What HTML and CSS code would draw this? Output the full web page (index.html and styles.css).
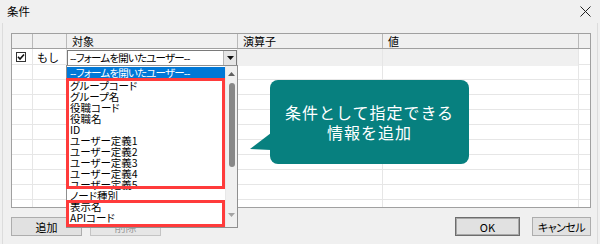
FILE: index.html
```html
<!DOCTYPE html>
<html lang="ja">
<head>
    <meta charset="UTF-8">
    <title>条件</title>
    <link rel="stylesheet" href="styles.css">
</head>
<body>

<div class="window">
    <div class="titlebar">
        <span class="title">条件</span>
        <svg class="close" width="11" height="11" viewBox="0 0 11 11">
            <path d="M0.5 0.5 L10.5 10.5 M10.5 0.5 L0.5 10.5" stroke="#222" stroke-width="1" fill="none"/>
        </svg>
    </div>

    <div class="client">
        <div class="grid">
            <div class="row head">
                <div class="cell"></div>
                <div class="cell"></div>
                <div class="cell">対象</div>
                <div class="cell">演算子</div>
                <div class="cell">値</div>
                <div class="cell"></div>
            </div>
            <div class="row current">
                <div class="cell"><span class="check">
                    <svg width="8" height="8" viewBox="0 0 8 8"><path d="M1 3.8 L3 6 L7 1.5" stroke="#111" stroke-width="1.6" fill="none"/></svg>
                </span></div>
                <div class="cell label">もし</div>
                <div class="cell">
                    <div class="combo">
                        <span class="combo-text">--フォームを開いたユーザー--</span>
                        <span class="combo-btn"><svg width="7" height="4" viewBox="0 0 7 4"><path d="M0 0 H7 L3.5 4 Z" fill="#111"/></svg></span>
                    </div>
                </div>
                <div class="cell readonly"></div>
                <div class="cell readonly"></div>
                <div class="cell"></div>
            </div>
            <div class="row"><div class="cell"></div><div class="cell"></div><div class="cell"></div><div class="cell"></div><div class="cell"></div><div class="cell"></div></div>
            <div class="row"><div class="cell"></div><div class="cell"></div><div class="cell"></div><div class="cell"></div><div class="cell"></div><div class="cell"></div></div>
            <div class="row"><div class="cell"></div><div class="cell"></div><div class="cell"></div><div class="cell"></div><div class="cell"></div><div class="cell"></div></div>
            <div class="row"><div class="cell"></div><div class="cell"></div><div class="cell"></div><div class="cell"></div><div class="cell"></div><div class="cell"></div></div>
            <div class="row"><div class="cell"></div><div class="cell"></div><div class="cell"></div><div class="cell"></div><div class="cell"></div><div class="cell"></div></div>
            <div class="row"><div class="cell"></div><div class="cell"></div><div class="cell"></div><div class="cell"></div><div class="cell"></div><div class="cell"></div></div>
            <div class="row"><div class="cell"></div><div class="cell"></div><div class="cell"></div><div class="cell"></div><div class="cell"></div><div class="cell"></div></div>
            <div class="row"><div class="cell"></div><div class="cell"></div><div class="cell"></div><div class="cell"></div><div class="cell"></div><div class="cell"></div></div>
            <div class="row"><div class="cell"></div><div class="cell"></div><div class="cell"></div><div class="cell"></div><div class="cell"></div><div class="cell"></div></div>
            <div class="row"><div class="cell"></div><div class="cell"></div><div class="cell"></div><div class="cell"></div><div class="cell"></div><div class="cell"></div></div>
        </div>

        <div class="actions">
            <button class="btn btn-add">追加</button>
            <button class="btn btn-del" disabled>削除</button>
            <span class="spacer"></span>
            <button class="btn btn-ok">OK</button>
            <button class="btn btn-cancel">キャンセル</button>
        </div>
    </div>

    <!-- 開いたドロップダウン -->
    <div class="dropdown">
        <ul class="options">
            <li class="selected">--フォームを開いたユーザー--</li>
            <li>グループコード</li>
            <li>グループ名</li>
            <li>役職コード</li>
            <li>役職名</li>
            <li>ID</li>
            <li>ユーザー定義1</li>
            <li>ユーザー定義2</li>
            <li>ユーザー定義3</li>
            <li>ユーザー定義4</li>
            <li>ユーザー定義5</li>
            <li>ノード種別</li>
            <li>表示名</li>
            <li>APIコード</li>
        </ul>
        <div class="scrollbar">
            <span class="arrow up"><svg width="7" height="4" viewBox="0 0 7 4"><path d="M0 4 H7 L3.5 0 Z" fill="#606060"/></svg></span>
            <span class="thumb"></span>
            <span class="arrow down"><svg width="7" height="4" viewBox="0 0 7 4"><path d="M0 0 H7 L3.5 4 Z" fill="#a3a3a3"/></svg></span>
        </div>
    </div>

    <div class="mark mark-top"></div>
    <div class="mark mark-bottom"></div>

    <div class="callout">条件として指定できる<br>情報を追加</div>
</div>

</body>
</html>
```

FILE: styles.css
```css
body {
    margin: 0;
    font-family: "Noto Sans CJK JP", "Noto Sans", sans-serif;
    font-size: 11px;
    color: #000;
}

.window {
    position: relative;
    width: 600px;
    height: 244px;
    background-color: #f0f0f0;
    overflow: hidden;
}

.titlebar {
    height: 23px;
    display: flex;
    align-items: center;
    justify-content: space-between;
    padding: 0 9px 1px 7px;
    box-sizing: border-box;
}

.title {
    font-size: 11.5px;
    line-height: 12px;
}

.client {
    margin: 0 2px;
    border-left: 1px solid #dcdcdc;
    border-right: 1px solid #dcdcdc;
    padding: 10px 0 0 8px;
    height: 221px;
    box-sizing: border-box;
}

/* 条件の表 */
.grid {
    width: 580px;
    height: 175px;
    border: 1px solid #a0a0a0;
    box-sizing: border-box;
    background-color: #fff;
    overflow: hidden;
}

.row {
    display: grid;
    grid-template-columns: 21px 34px 171px 145px 196px 11px;
    height: 15px;
    border-bottom: 1px solid #e6e6e6;
    box-sizing: border-box;
}

.cell {
    border-right: 1px solid #e6e6e6;
    box-sizing: border-box;
    line-height: 14px;
    white-space: nowrap;
}

.cell:last-child {
    border-right: none;
}

.row.head {
    background-color: #f0f0f0;
    border-bottom: 1px solid #a0a0a0;
}

.row.head .cell {
    border-right-color: #b9b9b9;
    padding-left: 5px;
    font-feature-settings: "palt";
}

.row.current {
    height: 16px;
}

.readonly {
    background-color: #f0f0f0;
}

.check {
    display: flex;
    align-items: center;
    justify-content: center;
    width: 10px;
    height: 10px;
    margin: 3px 0 0 4px;
    border: 1px solid #333;
    box-sizing: border-box;
    background-color: #fff;
}

.label {
    padding-left: 4px;
    line-height: 16px;
}

.combo {
    display: flex;
    height: 16px;
    margin-top: 1px;
    border: 1px solid #7a7a7a;
    box-sizing: border-box;
    background-color: #fff;
}

.combo-text {
    flex: 1;
    padding-left: 2px;
    line-height: 13px;
    font-size: 10.5px;
    font-feature-settings: "palt";
    letter-spacing: -0.8px;
}

.combo-btn {
    width: 12px;
    display: flex;
    align-items: center;
    justify-content: center;
    background-color: #e5e5e5;
    border-left: 1px solid #b5b5b5;
}

/* ボタン */
.actions {
    display: flex;
    width: 580px;
    margin-top: 9px;
}

.spacer {
    flex: 1;
}

.btn {
    height: 19px;
    padding: 0;
    font-family: inherit;
    font-size: 11px;
    line-height: 16px;
    color: #000;
    background-color: #e1e1e1;
    border: 1px solid #adadad;
    font-feature-settings: "palt";
}

.btn-add {
    width: 71px;
}

.btn-del {
    width: 71px;
    margin-left: 8px;
    color: #9a9a9a;
    background-color: #e6e6e6;
    border-color: #c4c4c4;
}

.btn-ok {
    width: 65px;
    border: 1px solid #6d6d6d;
    box-shadow: inset 0 0 0 1px #a8a8a8;
}

.btn-cancel {
    width: 59px;
    margin-left: 12px;
    letter-spacing: -0.5px;
}

/* ドロップダウン一覧 */
.dropdown {
    position: absolute;
    left: 66px;
    top: 65px;
    width: 172px;
    height: 163px;
    display: flex;
    border: 1px solid #8f8f8f;
    box-sizing: border-box;
    background-color: #fff;
}

.options {
    flex: 1;
    margin: 0;
    padding: 1px 0 0;
    list-style: none;
    font-size: 10.5px;
}

.options li {
    height: 11px;
    line-height: 11px;
    padding-left: 3px;
    white-space: nowrap;
    font-feature-settings: "palt";
    position: relative;
    top: 1px;
}

.options li.selected {
    height: 12px;
    line-height: 12px;
    top: 0;
    background-color: #0078d7;
    color: #fff;
    letter-spacing: -0.8px;
}

.scrollbar {
    width: 11px;
    display: flex;
    flex-direction: column;
    align-items: center;
    background-color: #f0f0f0;
    border-left: 1px solid #e8e8e8;
}

.arrow {
    display: flex;
    align-items: center;
    justify-content: center;
    height: 16px;
}

.thumb {
    width: 6px;
    height: 84px;
    margin-top: 1px;
    border-radius: 3px;
    background-color: #888;
}

.arrow.down {
    margin-top: auto;
    margin-bottom: 4px;
}

/* 注釈 */
.mark {
    position: absolute;
    left: 66px;
    width: 159px;
    border: 3px solid #ff3b3b;
    box-sizing: border-box;
}

.mark-top {
    top: 78px;
    height: 111px;
}

.mark-bottom {
    top: 200px;
    height: 27px;
}

.callout {
    position: absolute;
    left: 270px;
    top: 80px;
    width: 199px;
    height: 84px;
    display: flex;
    align-items: center;
    justify-content: center;
    text-align: center;
    border-radius: 8px;
    background-color: #07807f;
    color: #fff;
    font-size: 16px;
    line-height: 20px;
    letter-spacing: 1px;
}

.callout::before {
    content: "";
    position: absolute;
    left: -20px;
    top: 53px;
    width: 21px;
    height: 17px;
    background-color: #07807f;
    clip-path: polygon(100% 0, 0 94%, 100% 100%);
}
```
